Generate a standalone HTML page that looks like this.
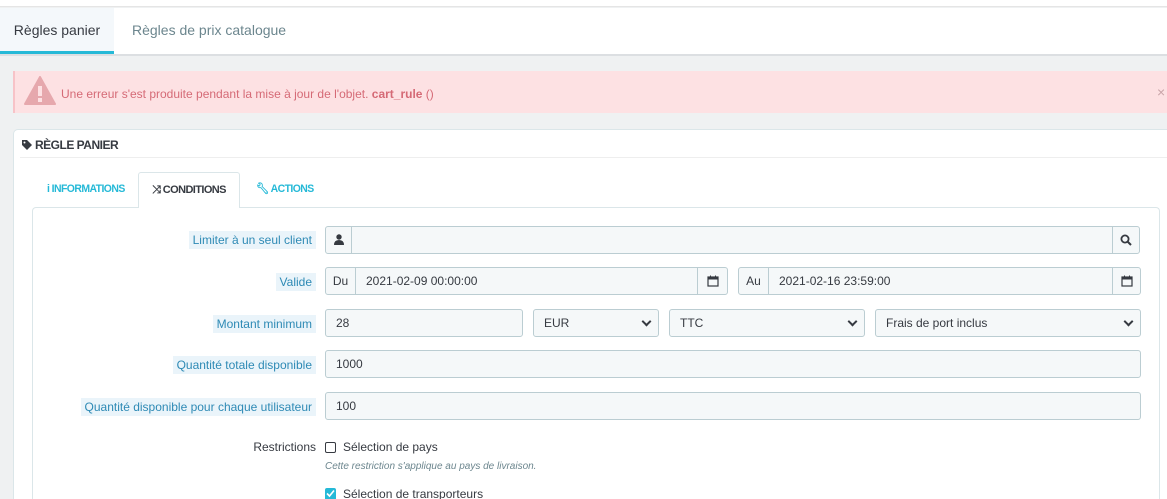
<!DOCTYPE html>
<html><head><meta charset="utf-8"><style>
*{box-sizing:border-box;margin:0;padding:0}
html,body{width:1167px;height:499px;overflow:hidden}
body{background:#eff1f2;font-family:"Liberation Sans",sans-serif;font-size:12px;color:#363a41;position:relative}
.abs{position:absolute}
.top{left:0;top:0;width:1167px;height:7px;background:#fff;border-bottom:1px solid #e5e5e5}
.tabs{left:0;top:8px;width:1167px;height:48px;background:#fff;border-bottom:2px solid #dcdfe2}
.tab1{left:0;top:0;width:114px;height:46px;background:#f4f8fb;border-bottom:3px solid #25b9d7;font-size:14px;line-height:44px;text-align:center;color:#363a41}
.tab2{left:132px;top:0;height:46px;line-height:44px;font-size:14px;color:#6c868e}
.alert{left:13px;top:71px;width:1154px;height:42px;background:#fde1e3;border-left:2px solid #f7c3c8;color:#d56a76;font-size:12px}
.panel{left:13px;top:129px;width:1160px;height:370px;background:#fff;border:1px solid #dbe6e9;border-bottom:none;border-radius:5px 5px 0 0;overflow:hidden}
.ph{left:8px;top:8px;font-size:12px;font-weight:bold;color:#363a41;letter-spacing:-.5px}
.hr{left:6px;top:27px;width:1150px;height:1px;background:#eee}
.t{top:42px;height:36px;line-height:34px;font-size:11px;font-weight:bold;color:#25b9d7;letter-spacing:-.6px;transform:scaleX(.95);transform-origin:left}
.tact{left:124px;width:102px;background:#fff;border:1px solid #dbe6e9;border-bottom:none;border-radius:3px 3px 0 0;color:#363a41;text-align:center;z-index:2;transform:none}
.box{left:18px;top:77px;width:1128px;height:293px;border:1px solid #dbe6e9;border-bottom:none;border-radius:4px 4px 0 0}
.lbl{right:851px;height:18px;line-height:18px;padding:0 4px;background:#eaf4fa;color:#2e8ab5;font-size:12px}
.inp{height:28px;background:#f5f8f9;border:1px solid #bbcdd2;border-radius:3px;line-height:26px;padding-left:10px;font-size:12px;color:#363a41}
.add{height:28px;background:#f5f8f9;border:1px solid #bbcdd2;line-height:26px;text-align:center;font-size:12px}
.chev{position:absolute;right:8px;top:8px;width:7px;height:7px;border-right:2px solid #363a41;border-bottom:2px solid #363a41;transform:rotate(45deg)}
</style></head><body>
<div class="abs top"></div>
<div class="abs tabs"><div class="abs tab1">Règles panier</div><div class="abs tab2">Règles de prix catalogue</div></div>
<div class="abs alert">
<svg class="abs" style="left:9px;top:5px" width="32" height="30" viewBox="0 0 32 30"><path d="M16 1 L31 28 L1 28 Z" fill="#e6a8ad" stroke="#e6a8ad" stroke-linejoin="round" stroke-width="2"/><rect x="14" y="10" width="4" height="10" fill="#fde1e3"/><rect x="14" y="22" width="4" height="4" fill="#fde1e3"/></svg>
<div class="abs" style="left:46px;top:16px">Une erreur s'est produite pendant la mise à jour de l'objet. <b>cart_rule</b> ()</div>
<div class="abs" style="left:1142px;top:13px;color:#c9a4a8;font-size:14px">×</div>
</div>
<div class="abs panel">
<svg class="abs" style="left:8px;top:10px" width="10" height="10" viewBox="0 0 10 10"><path d="M0 0H5L10 5L5 10L0 5Z" fill="#363a41"/><circle cx="2.5" cy="2.5" r="1" fill="#fff"/></svg>
<div class="abs ph" style="left:21px">RÈGLE PANIER</div>
<div class="abs hr"></div>
<div class="abs t" style="left:33px">i INFORMATIONS</div>
<div class="abs t tact">⤨ CONDITIONS</div>
<div class="abs t" style="left:242px">🔧︎ ACTIONS</div>
<div class="abs box"></div>
</div>
<div class="abs lbl" style="top:231px">Limiter à un seul client</div>
<div class="abs add" style="left:325px;top:226px;width:27px;border-radius:3px 0 0 3px">
<svg width="10" height="11" viewBox="0 0 10 11" style="margin-top:7px"><circle cx="5" cy="3" r="2.7" fill="#363a41"/><path d="M0 11 Q0 6 5 6 Q10 6 10 11Z" fill="#363a41"/></svg></div>
<div class="abs inp" style="left:351px;top:226px;width:762px;border-radius:0"></div>
<div class="abs add" style="left:1112px;top:226px;width:28px;border-radius:0 3px 3px 0">
<svg width="12" height="12" viewBox="0 0 12 12" style="margin-top:7px"><circle cx="5" cy="5" r="3.6" fill="none" stroke="#363a41" stroke-width="1.8"/><path d="M7.5 7.5L11 11" stroke="#363a41" stroke-width="2"/></svg></div>

<div class="abs lbl" style="top:273px">Valide</div>
<div class="abs add" style="left:325px;top:267px;width:31px;border-radius:3px 0 0 3px">Du</div>
<div class="abs inp" style="left:355px;top:267px;width:343px;border-radius:0">2021-02-09 00:00:00</div>
<div class="abs add" style="left:697px;top:267px;width:31px;border-radius:0 3px 3px 0">
<svg width="12" height="12" viewBox="0 0 12 12" style="margin-top:7px"><rect x="1" y="2" width="10" height="9" fill="none" stroke="#363a41" stroke-width="1.2"/><rect x="1" y="2" width="10" height="2.5" fill="#363a41"/><path d="M3.5 0.5v3M8.5 0.5v3" stroke="#363a41"/></svg></div>
<div class="abs add" style="left:738px;top:267px;width:31px;border-radius:3px 0 0 3px">Au</div>
<div class="abs inp" style="left:768px;top:267px;width:345px;border-radius:0">2021-02-16 23:59:00</div>
<div class="abs add" style="left:1112px;top:267px;width:29px;border-radius:0 3px 3px 0">
<svg width="12" height="12" viewBox="0 0 12 12" style="margin-top:7px"><rect x="1" y="2" width="10" height="9" fill="none" stroke="#363a41" stroke-width="1.2"/><rect x="1" y="2" width="10" height="2.5" fill="#363a41"/><path d="M3.5 0.5v3M8.5 0.5v3" stroke="#363a41"/></svg></div>

<div class="abs lbl" style="top:315px">Montant minimum</div>
<div class="abs inp" style="left:325px;top:309px;width:198px">28</div>
<div class="abs inp" style="left:533px;top:309px;width:126px">EUR<span class="chev"></span></div>
<div class="abs inp" style="left:669px;top:309px;width:196px">TTC<span class="chev"></span></div>
<div class="abs inp" style="left:875px;top:309px;width:266px">Frais de port inclus<span class="chev"></span></div>

<div class="abs lbl" style="top:356px">Quantité totale disponible</div>
<div class="abs inp" style="left:325px;top:350px;width:816px">1000</div>
<div class="abs lbl" style="top:398px">Quantité disponible pour chaque utilisateur</div>
<div class="abs inp" style="left:325px;top:392px;width:816px">100</div>

<div class="abs" style="right:851px;top:440px;font-size:12px;color:#363a41">Restrictions</div>
<div class="abs" style="left:325px;top:442px;width:11px;height:11px;border:1px solid #363a41;border-radius:2px;background:#fff"></div>
<div class="abs" style="left:343px;top:440px">Sélection de pays</div>
<div class="abs" style="left:325px;top:461px;font-style:italic;font-size:10px;color:#6c868e">Cette restriction s'applique au pays de livraison.</div>
<div class="abs" style="left:325px;top:488px;width:11px;height:11px;border-radius:2px 2px 0 0;background:#25b9d7;overflow:hidden"><svg width="11" height="11" viewBox="0 0 11 11" style="display:block"><path d="M2 5.5L4.5 8L9 2.5" fill="none" stroke="#fff" stroke-width="1.6"/></svg></div>
<div class="abs" style="left:343px;top:487px;height:12px;overflow:hidden;line-height:14px">Sélection de transporteurs</div>
</body></html>
